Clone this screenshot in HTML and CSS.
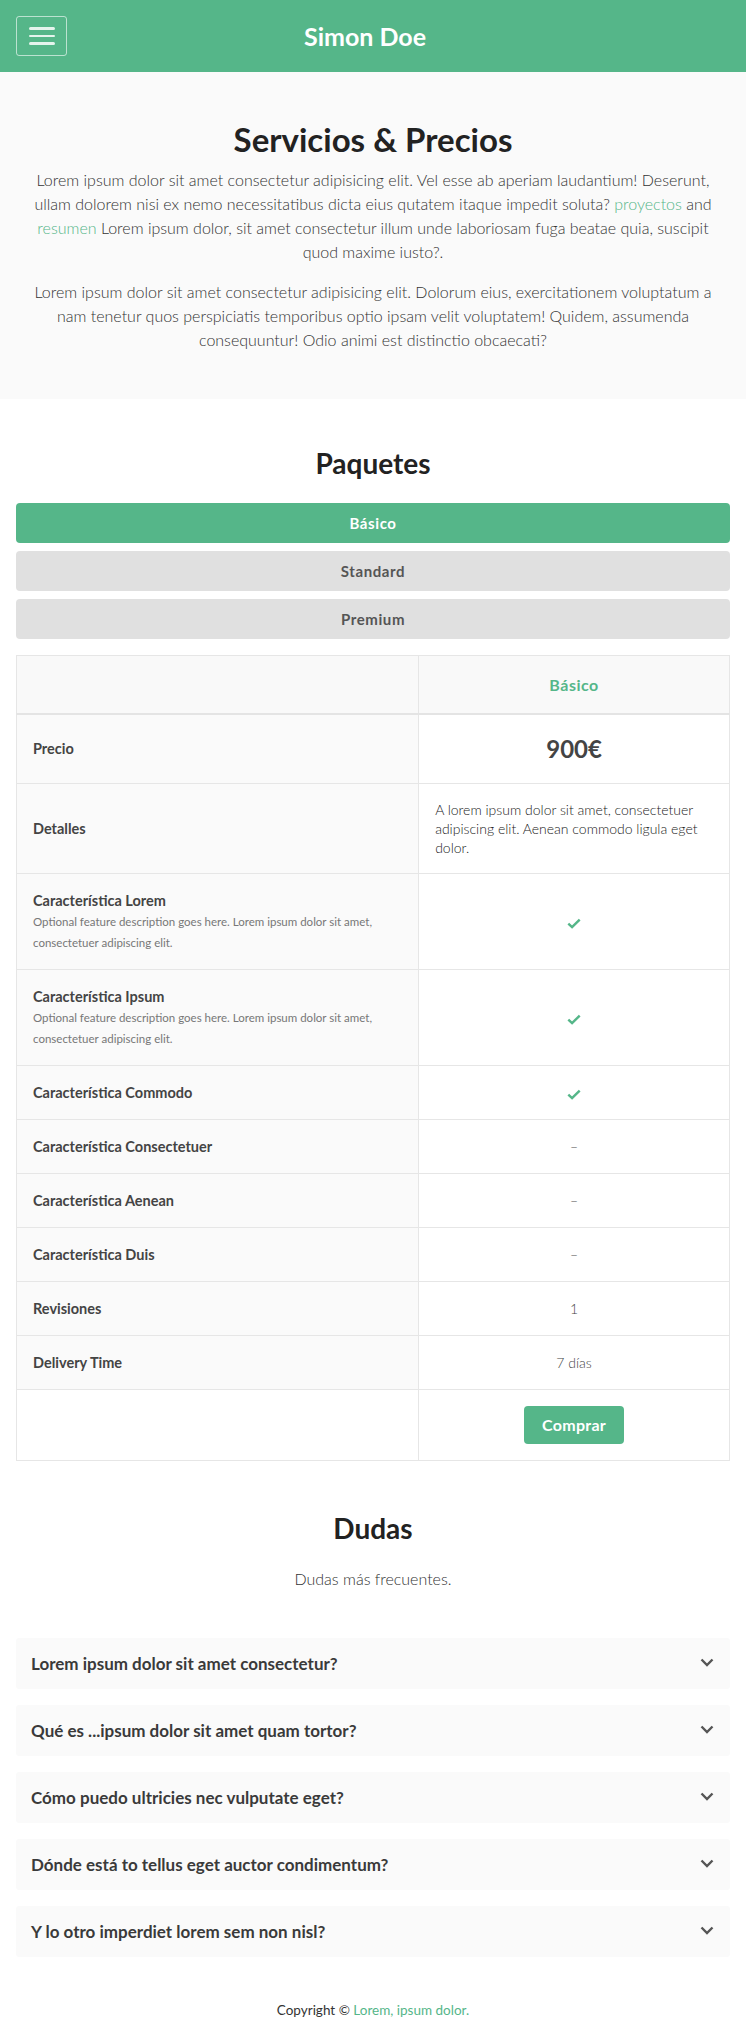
FILE: index.html
```html
<!DOCTYPE html>
<html lang="es">
<head>
<meta charset="utf-8">
<title>Simon Doe - Servicios & Precios</title>
<link rel="stylesheet" href="styles.css">
</head>
<body>
<header class="navbar">
  <button class="toggler" aria-label="Menu">
    <span class="bar"></span><span class="bar"></span><span class="bar"></span>
  </button>
  <div class="brand">Simon Doe</div>
  <div class="spacer"></div>
</header>

<section class="hero">
  <h1 class="title">Servicios &amp; Precios</h1>
  <p class="lead">Lorem ipsum dolor sit amet consectetur adipisicing elit. Vel esse ab aperiam laudantium! Deserunt, ullam dolorem nisi ex nemo necessitatibus dicta eius qutatem itaque impedit soluta? <a class="link" href="#">proyectos</a> and <a class="link" href="#">resumen</a> Lorem ipsum dolor, sit amet consectetur illum unde laboriosam fuga beatae quia, suscipit quod maxime iusto?.</p>
  <p class="lead last">Lorem ipsum dolor sit amet consectetur adipisicing elit. Dolorum eius, exercitationem voluptatum a nam tenetur quos perspiciatis temporibus optio ipsam velit voluptatem! Quidem, assumenda consequuntur! Odio animi est distinctio obcaecati?</p>
</section>

<section class="packages">
  <h2 class="section-title">Paquetes</h2>
  <div class="tabs">
    <button class="tab active">Básico</button>
    <button class="tab">Standard</button>
    <button class="tab">Premium</button>
  </div>
  <table class="pricing">
    <colgroup><col class="col-label"><col class="col-plan"></colgroup>
    <thead>
      <tr><th class="label"></th><th class="plan-name">Básico</th></tr>
    </thead>
    <tbody>
      <tr class="row-price"><td class="label">Precio</td><td class="value price">900€</td></tr>
      <tr><td class="label">Detalles</td><td class="value details">A lorem ipsum dolor sit amet, consectetuer adipiscing elit. Aenean commodo ligula eget dolor.</td></tr>
      <tr><td class="label"><div class="feat">Característica Lorem</div><div class="feat-desc">Optional feature description goes here. Lorem ipsum dolor sit amet, consectetuer adipiscing elit.</div></td><td class="value"><svg class="check" viewBox="0 0 16 12" width="14" height="11"><path d="M1.5 6.2 L5.8 10.2 L14.5 1.6" fill="none" stroke="#55b689" stroke-width="2.8"/></svg></td></tr>
      <tr><td class="label"><div class="feat">Característica Ipsum</div><div class="feat-desc">Optional feature description goes here. Lorem ipsum dolor sit amet, consectetuer adipiscing elit.</div></td><td class="value"><svg class="check" viewBox="0 0 16 12" width="14" height="11"><path d="M1.5 6.2 L5.8 10.2 L14.5 1.6" fill="none" stroke="#55b689" stroke-width="2.8"/></svg></td></tr>
      <tr><td class="label">Característica Commodo</td><td class="value"><svg class="check" viewBox="0 0 16 12" width="14" height="11"><path d="M1.5 6.2 L5.8 10.2 L14.5 1.6" fill="none" stroke="#55b689" stroke-width="2.8"/></svg></td></tr>
      <tr><td class="label">Característica Consectetuer</td><td class="value muted">–</td></tr>
      <tr><td class="label">Característica Aenean</td><td class="value muted">–</td></tr>
      <tr><td class="label">Característica Duis</td><td class="value muted">–</td></tr>
      <tr><td class="label">Revisiones</td><td class="value muted">1</td></tr>
      <tr><td class="label">Delivery Time</td><td class="value muted">7 días</td></tr>
      <tr class="row-buy"><td class="blank"></td><td class="value"><button class="buy">Comprar</button></td></tr>
    </tbody>
  </table>
</section>

<section class="faq">
  <h2 class="section-title">Dudas</h2>
  <p class="subtitle">Dudas más frecuentes.</p>
  <div class="faq-list">
    <div class="faq-item"><span>Lorem ipsum dolor sit amet consectetur?</span><svg class="chev" viewBox="0 0 14 9" width="14" height="9"><path d="M1.5 1.5 L7 7 L12.5 1.5" fill="none" stroke="#555" stroke-width="2.4"/></svg></div>
    <div class="faq-item"><span>Qué es ...ipsum dolor sit amet quam tortor?</span><svg class="chev" viewBox="0 0 14 9" width="14" height="9"><path d="M1.5 1.5 L7 7 L12.5 1.5" fill="none" stroke="#555" stroke-width="2.4"/></svg></div>
    <div class="faq-item"><span>Cómo puedo ultricies nec vulputate eget?</span><svg class="chev" viewBox="0 0 14 9" width="14" height="9"><path d="M1.5 1.5 L7 7 L12.5 1.5" fill="none" stroke="#555" stroke-width="2.4"/></svg></div>
    <div class="faq-item"><span>Dónde está to tellus eget auctor condimentum?</span><svg class="chev" viewBox="0 0 14 9" width="14" height="9"><path d="M1.5 1.5 L7 7 L12.5 1.5" fill="none" stroke="#555" stroke-width="2.4"/></svg></div>
    <div class="faq-item"><span>Y lo otro imperdiet lorem sem non nisl?</span><svg class="chev" viewBox="0 0 14 9" width="14" height="9"><path d="M1.5 1.5 L7 7 L12.5 1.5" fill="none" stroke="#555" stroke-width="2.4"/></svg></div>
  </div>
</section>

<footer class="footer">Copyright © <a class="link" href="#">Lorem, ipsum dolor.</a></footer>
</body>
</html>
```

FILE: styles.css
```css
* { box-sizing: border-box; }
html, body { margin: 0; padding: 0; }
body {
  font-family: Lato, "Open Sans", "Liberation Sans", sans-serif;
  color: #444;
  background: #fff;
  font-size: 16px;
  line-height: 1.5;
}
.link { color: #55b689; text-decoration: none; }

.navbar {
  height: 72px;
  background: #55b689;
  display: grid;
  grid-template-columns: 1fr auto 1fr;
  align-items: center;
  padding: 0 16px;
}
.toggler {
  width: 51px;
  height: 40px;
  border: 1px solid rgba(255,255,255,0.6);
  border-radius: 3px;
  background: transparent;
  display: flex;
  flex-direction: column;
  align-items: center;
  justify-content: center;
  gap: 5px;
  padding: 0;
  justify-self: start;
}
.toggler .bar {
  display: block;
  width: 26px;
  height: 2.6px;
  border-radius: 2px;
  background: rgba(255,255,255,0.85);
}
.brand {
  color: #fff;
  font-weight: 700;
  font-size: 25px;
  line-height: 1.2;
  padding-right: 16px;
}

.hero {
  background: #fafafa;
  padding: 48px 31px 47px;
  text-align: center;
}
.title {
  margin: 0 0 8px;
  font-size: 33px;
  line-height: 1.2;
  font-weight: 700;
  color: #222;
}
.lead {
  margin: 0 0 16px;
  font-weight: 300;
  font-size: 16px;
  line-height: 24px;
  color: #333;
}
.lead.last { margin-bottom: 0; }

.packages {
  padding: 48px 16px 0;
}
.section-title {
  margin: 0 0 23px;
  text-align: center;
  font-size: 28px;
  line-height: 1.2;
  font-weight: 700;
  color: #222;
}
.tabs {
  display: flex;
  flex-direction: column;
  gap: 8px;
}
.tab {
  height: 40px;
  border: 0;
  border-radius: 4px;
  background: #e0e0e0;
  color: #555;
  font-family: inherit;
  font-weight: 700;
  font-size: 15px;
  letter-spacing: 0.6px;
}
.tab.active {
  background: #55b689;
  color: #fff;
}

.pricing {
  margin-top: 16px;
  width: 100%;
  border-collapse: collapse;
  border: 1px solid #e6e6e6;
  font-size: 14px;
}
.col-label { width: 56.4%; }
.pricing th, .pricing td {
  border: 1px solid #e6e6e6;
  padding: 16px;
  text-align: left;
  vertical-align: middle;
  line-height: 21px;
}
.pricing thead th {
  background: #f9f9f9;
  border-bottom: 2px solid #e4e4e4;
  height: 58px;
}
.plan-name {
  text-align: center !important;
  color: #55b689;
  font-size: 16px;
  font-weight: 700;
  letter-spacing: 0.5px;
}
.label {
  background: #fafafa;
  font-weight: 700;
  font-size: 14.5px;
  color: #444;
}
.blank { background: #fff; }
.value {
  text-align: center !important;
  background: #fff;
}
.price {
  font-size: 24px;
  font-weight: 700;
  color: #444;
  line-height: 36px !important;
}
.details {
  text-align: left !important;
  font-weight: 300;
  color: #222;
  line-height: 19px !important;
}
.feat { font-weight: 700; }
.feat-desc {
  font-weight: 400;
  font-size: 11.5px;
  color: #777;
}
.check { display: inline-block; vertical-align: middle; }
.muted { color: #444; font-weight: 300; }
.buy {
  width: 100px;
  height: 38px;
  border: 0;
  border-radius: 4px;
  background: #55b689;
  color: #fff;
  font-family: inherit;
  font-weight: 700;
  font-size: 16px;
  letter-spacing: 0.3px;
  vertical-align: middle;
}

.faq {
  padding: 51px 16px 0;
}
.faq .section-title { margin-bottom: 22px; }
.subtitle {
  margin: 0;
  text-align: center;
  font-weight: 300;
  font-size: 16px;
  line-height: 24px;
  color: #333;
}
.faq-list {
  margin-top: 47px;
  display: flex;
  flex-direction: column;
  gap: 16px;
}
.faq-item {
  height: 51px;
  background: #fafafa;
  border-radius: 3px;
  padding: 0 16px 0 15px;
  display: flex;
  align-items: center;
  justify-content: space-between;
  font-weight: 700;
  font-size: 17px;
  color: #3a3a3a;
}
.chev { margin-top: -3px; flex: none; }

.footer {
  margin-top: 43px;
  padding-bottom: 25px;
  text-align: center;
  font-size: 13.5px;
  line-height: 20px;
  font-weight: 400;
  color: #333;
}
```
